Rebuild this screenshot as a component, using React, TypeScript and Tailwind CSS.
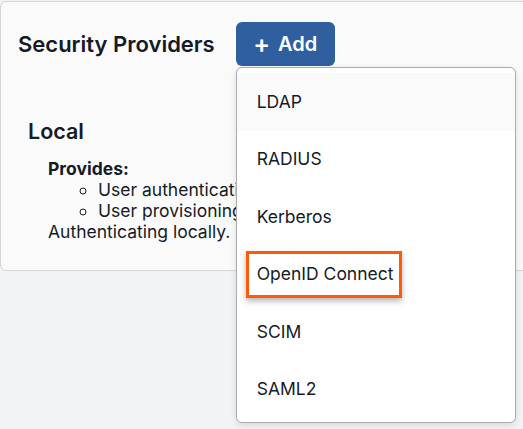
import React from "react";

export default function App() {
  const items = ["LDAP", "RADIUS", "Kerberos", "OpenID Connect", "SCIM", "SAML2"];
  return (
    <div className="min-h-screen w-full overflow-hidden bg-[#f2f3f5] font-['Inter',sans-serif] text-[#151a26]">
      <div className="mt-px h-[270px] w-[calc(100%+20px)] rounded-l-md border border-[#d4d5d8] bg-[#fafafa]">
        <div className="flex items-center gap-[21px] pl-[17px] pt-[20px]">
          <h1 className="text-[22px] font-semibold leading-[28px]">Security Providers</h1>
          <div className="relative">
            <button className="flex h-[44px] w-[99px] items-center justify-center gap-[8px] rounded-[6px] bg-[#2f5f9f] text-[20px] font-semibold text-white">
              <span className="text-[25px] font-semibold leading-none">+</span>
              <span>Add</span>
            </button>
            <div className="absolute left-0 top-[45px] z-10 w-[280px] rounded-[6px] border border-[#a9abb0] bg-white pb-[4px] pt-[5px] shadow-[0_2px_6px_rgba(0,0,0,0.12)]">
              {items.map((it, i) => (
                <div
                  key={it}
                  className={`relative flex h-[57.5px] items-center pl-[20px] text-[17.5px] ${i === 0 ? "bg-[#fafafa]" : ""}`}
                >
                  {it}
                  {it === "OpenID Connect" && (
                    <div className="pointer-events-none absolute left-[9px] top-[5px] h-[47px] w-[156px] border-[3px] border-[#ff5a0a] shadow-[0_3px_6px_rgba(0,0,0,0.3)]" />
                  )}
                </div>
              ))}
            </div>
          </div>
        </div>
        <div className="mt-[51px] pl-[27px]">
          <h2 className="text-[21.5px] font-semibold leading-[28px]">Local</h2>
          <div className="mt-[13px] pl-[20px] text-[17.5px] leading-[21px]">
            <div className="font-bold">Provides:</div>
            <ul className="list-[circle] pl-[50px]">
              <li>User authentication</li>
              <li>User provisioning</li>
            </ul>
            <div>Authenticating locally.</div>
          </div>
        </div>
      </div>
    </div>
  );
}
